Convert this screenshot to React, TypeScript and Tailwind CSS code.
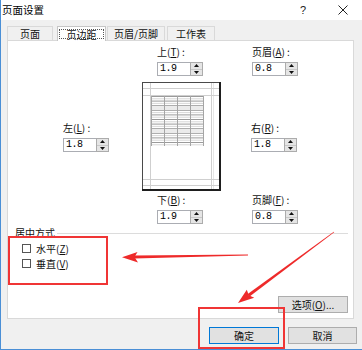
import React from 'react';

const cjk = "font-['Noto_Sans_CJK_SC',sans-serif]";

function Spinner() {
  return (
    <div className="flex h-[14px] w-[13px] flex-col border border-[#acacac] bg-[#e5e5e5]">
      <div className="flex flex-1 items-center justify-center border-b border-[#c8c8c8]">
        <svg width="5" height="3" viewBox="0 0 5 3">
          <path d="M0 3 L2.5 0 L5 3 Z" fill="#111" />
        </svg>
      </div>
      <div className="flex flex-1 items-center justify-center">
        <svg width="5" height="3" viewBox="0 0 5 3">
          <path d="M0 0 L2.5 3 L5 0 Z" fill="#111" />
        </svg>
      </div>
    </div>
  );
}

function Field({ name, keyChar, value }: { name: string; keyChar: string; value: string }) {
  return (
    <div className="flex w-[46px] flex-col">
      <div className={`h-[14px] whitespace-nowrap text-[10px] leading-[14px] text-[#111] ${cjk}`}>
        {name}(<span className="underline">{keyChar}</span>) :
      </div>
      <div className="mt-[3px] flex h-[14px]">
        <div className="flex h-[14px] w-[34px] items-center border border-r-0 border-[#abadb3] bg-white pl-[2px]">
          <span className="font-['Liberation_Mono',monospace] text-[10px] leading-none tracking-[-0.5px] text-black">
            {value}
          </span>
        </div>
        <Spinner />
      </div>
    </div>
  );
}

function PagePreview() {
  const rows = Array.from({ length: 22 }, (_, i) => 14.5 + i * 2.3);
  return (
    <svg width="79" height="109" viewBox="0 0 79 109">
      <rect x="0" y="0" width="79" height="109" fill="#fff" />
      {/* margin guides */}
      <line x1="8.5" y1="1" x2="8.5" y2="107" stroke="#cfcfcf" />
      <line x1="69.5" y1="1" x2="69.5" y2="107" stroke="#cfcfcf" />
      <line x1="71.5" y1="1" x2="71.5" y2="107" stroke="#e6e6e6" />
      <line x1="1" y1="6.5" x2="77" y2="6.5" stroke="#cfcfcf" />
      <line x1="1" y1="13.5" x2="77" y2="13.5" stroke="#cfcfcf" />
      <line x1="1" y1="97.5" x2="77" y2="97.5" stroke="#cfcfcf" />
      <line x1="1" y1="103.5" x2="77" y2="103.5" stroke="#cfcfcf" />
      {/* sheet grid */}
      {rows.map((y, i) => (
        <line key={y} x1="9" y1={y} x2="61" y2={y} stroke={i % 2 === 0 ? '#8f8f8f' : '#d2d2d2'} strokeWidth="0.9" />
      ))}
      {[9.5, 22.5, 35.5, 48.5, 61.5].map((x) => (
        <line key={x} x1={x} y1="14" x2={x} y2="64" stroke="#a5a5a5" />
      ))}
      {/* page edge */}
      <line x1="0.5" y1="0" x2="0.5" y2="109" stroke="#4a4a4a" />
      <line x1="0" y1="0.5" x2="79" y2="0.5" stroke="#4a4a4a" />
      <rect x="77" y="0" width="2" height="109" fill="#1e1e1e" />
      <rect x="0" y="107" width="79" height="2" fill="#1e1e1e" />
    </svg>
  );
}

function Checkbox({ label, keyChar }: { label: string; keyChar: string }) {
  return (
    <div className="flex h-[15px] items-center pl-[14px]">
      <div className="h-[9px] w-[9px] border border-[#555] bg-white" />
      <span className={`ml-[5px] text-[10px] leading-none text-[#111] ${cjk}`}>
        {label}(<span className="underline">{keyChar}</span>)
      </span>
    </div>
  );
}

export default function App() {
  return (
    <div className={`relative h-[350px] w-[362px] overflow-hidden border-b border-l border-[#4a8fd6] bg-[#f0f0f0] ${cjk}`}>
      {/* Title bar */}
      <div className="flex h-[20px] items-center bg-white">
        <span className="ml-[1px] text-[10.5px] leading-none text-black">页面设置</span>
        <span className="ml-auto font-['Liberation_Sans',sans-serif] text-[11px] leading-none text-[#222]">?</span>
        <svg className="ml-[32px] mr-[14px]" width="10" height="10" viewBox="0 0 10 10">
          <path d="M0.5 0.5 L9.5 9.5 M9.5 0.5 L0.5 9.5" stroke="#222" strokeWidth="1" />
        </svg>
      </div>

      {/* Tabs */}
      <div className="relative z-10 ml-[6px] mt-[6px] flex h-[14px] items-end">
        <div className="flex h-[14px] w-[46px] items-center justify-center border border-b-0 border-[#d9d9d9] bg-[#f0f0f0] text-[10px] text-[#111]">
          页面
        </div>
        <div className="ml-[4px] mb-[-1px] flex h-[15px] w-[49px] items-center justify-center border border-b-0 border-[#c6c6c6] bg-white">
          <span className="flex h-[10px] w-[45px] items-center justify-center border border-dotted border-[#555] text-[10px] text-[#111]">
            页边距
          </span>
        </div>
        <div className="ml-[1px] flex h-[14px] w-[58px] items-center justify-center border border-b-0 border-[#d9d9d9] bg-[#f0f0f0] text-[10px] text-[#111]">
          页眉/页脚
        </div>
        <div className="ml-[2px] flex h-[14px] w-[48px] items-center justify-center border border-b-0 border-[#d9d9d9] bg-[#f0f0f0] text-[10px] text-[#111]">
          工作表
        </div>
      </div>

      {/* Panel */}
      <div className="ml-[6px] flex h-[279px] w-[347px] flex-col border border-[#d9d9d9] bg-white">
        <div className="flex pt-[4px]">
          <div className="ml-[149px]">
            <Field name="上" keyChar="T" value="1.9" />
          </div>
          <div className="ml-[49px]">
            <Field name="页眉" keyChar="A" value="0.8" />
          </div>
        </div>

        <div className="mt-[6px] flex items-center">
          <div className="ml-[55px]">
            <Field name="左" keyChar="L" value="1.8" />
          </div>
          <div className="ml-[33px] flex">
            <PagePreview />
          </div>
          <div className="ml-[30px]">
            <Field name="右" keyChar="R" value="1.8" />
          </div>
        </div>

        <div className="mt-[2px] flex">
          <div className="ml-[149px]">
            <Field name="下" keyChar="B" value="1.9" />
          </div>
          <div className="ml-[49px]">
            <Field name="页脚" keyChar="F" value="0.8" />
          </div>
        </div>

        {/* 居中方式 */}
        <div className="mt-[2px] flex h-[14px] items-center pl-[7px]">
          <span className="text-[10px] leading-none text-[#111]">居中方式</span>
          <div className="ml-[2px] mr-[5px] h-px flex-1 bg-[#dcdcdc]" />
        </div>
        <div className="mt-[1px]">
          <Checkbox label="水平" keyChar="Z" />
          <Checkbox label="垂直" keyChar="V" />
        </div>

        <div className="mr-[5px] mt-[25px] flex justify-end">
          <button className="flex h-[17px] w-[70px] items-center justify-center border border-[#adadad] bg-[#e1e1e1] text-[10px] leading-none text-[#111]">
            选项(<span className="underline">O</span>)...
          </button>
        </div>
      </div>

      {/* Dialog buttons */}
      <div className="ml-[208px] mt-[8px] flex gap-[9px]">
        <button className="flex h-[17px] w-[70px] items-center justify-center border border-[#0078d7] bg-[#e1e1e1] text-[10px] leading-none text-[#111]">
          确定
        </button>
        <button className="flex h-[17px] w-[69px] items-center justify-center border border-[#adadad] bg-[#e1e1e1] text-[10px] leading-none text-[#111]">
          取消
        </button>
      </div>

      {/* Annotations */}
      <div className="absolute left-[7px] top-[236px] h-[49px] w-[100px] border-2 border-[#f03535]" />
      <div className="absolute left-[197px] top-[307px] h-[42px] w-[87px] border-2 border-[#f03535]" />
      <svg className="pointer-events-none absolute left-[-1px] top-0" width="362" height="350" viewBox="0 0 362 350">
        <polygon points="248,254.6 248,255.4 134,258.6 134,255.4" fill="#ee2a2a" />
        <polygon points="122,257.3 137.5,252 134.5,257 138,262.5" fill="#ee2a2a" />
        <polygon points="334.2,232.2 333.8,231.8 247.4,294.2 249.6,296.6" fill="#ee2a2a" />
        <polygon points="238,303 246.8,289.7 248.8,295.3 254.2,297.7" fill="#ee2a2a" />
      </svg>
    </div>
  );
}
